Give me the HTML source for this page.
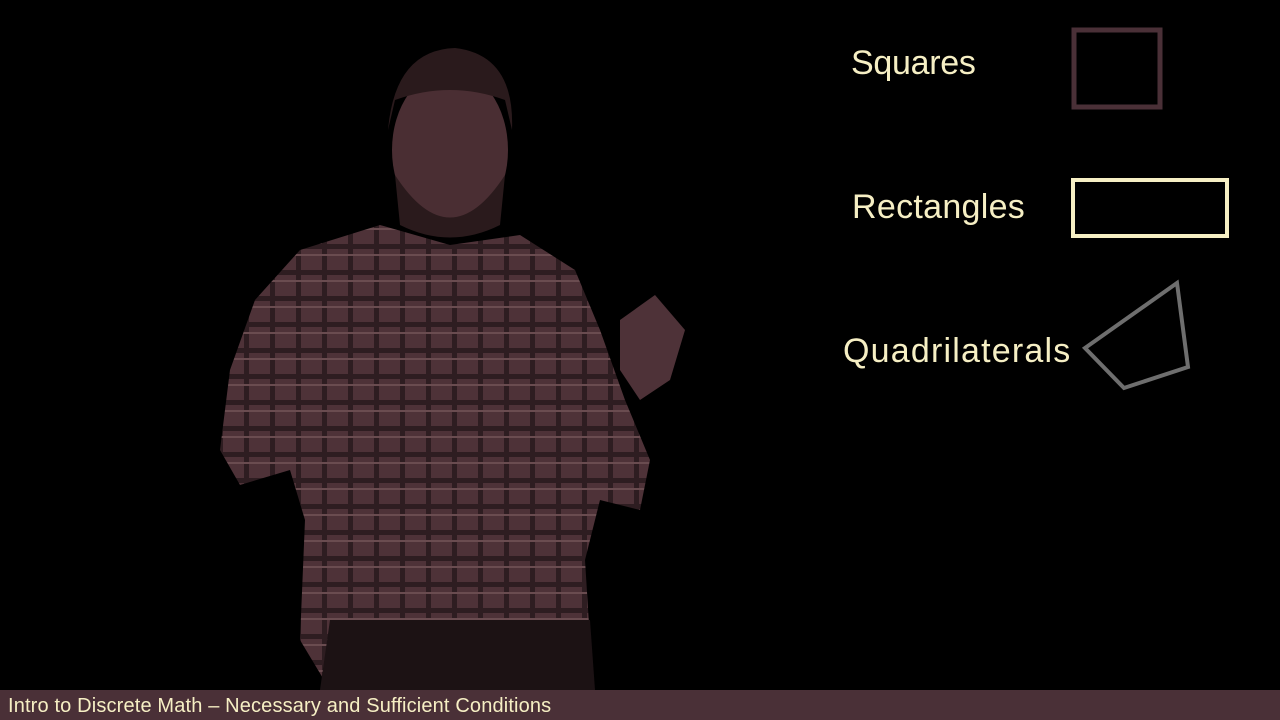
<!DOCTYPE html>
<html><head><style>
body{margin:0;width:1280px;height:720px;background:#000;overflow:hidden;position:relative;font-family:"Liberation Sans",sans-serif}
.t{position:absolute;color:#f6efc4;font-size:34px;letter-spacing:-0.3px}
.bar{position:absolute;left:0;top:690px;width:1280px;height:30px;background:#4a3037}
.bar span{position:absolute;left:8px;top:5px;color:#f6efc4;font-size:20px;letter-spacing:0.15px}
</style></head><body>
<svg width="1280" height="720" style="position:absolute;left:0;top:0">
<defs>
<pattern id="pl" width="26" height="26" patternUnits="userSpaceOnUse">
<rect width="26" height="26" fill="#4e3238"/>
<rect x="0" y="10" width="26" height="5" fill="#2e1d21"/>
<rect x="10" y="0" width="5" height="26" fill="#2e1d21"/>
<rect x="0" y="20" width="26" height="2" fill="#6a4c50"/>
</pattern>
</defs>
<path d="M300,250 L380,225 L450,245 L520,235 L575,270 L600,330 L625,400 L650,460 L640,510 L600,500 L585,560 L590,640 L540,690 L330,690 L300,640 L305,520 L290,470 L240,485 L220,450 L230,370 L255,300 Z" fill="url(#pl)"/>
<path d="M620,320 L655,295 L685,330 L670,380 L640,400 L620,370 Z" fill="#4e3238"/>
<path d="M330,620 L590,620 L595,690 L320,690 Z" fill="#1c1214"/>
<ellipse cx="450" cy="150" rx="58" ry="80" fill="#4a2e33"/>
<path d="M388,130 Q395,50 455,48 Q515,55 512,130 L505,100 Q450,80 395,100 Z" fill="#2a1a1c"/>
<path d="M395,175 Q450,260 505,175 L500,225 Q450,250 400,225 Z" fill="#2a1a1c"/>
<rect x="1074" y="30" width="86" height="77" fill="none" stroke="#4a3037" stroke-width="5"/>
<rect x="1073" y="180" width="154" height="56" fill="none" stroke="#f6efc4" stroke-width="4"/>
<polygon points="1177,283 1085,348 1124,388 1188,367" fill="none" stroke="#6e6e6e" stroke-width="4"/>
</svg>
<div class="t" style="left:851px;top:44px">Squares</div>
<div class="t" style="left:852px;top:188px;letter-spacing:0.3px">Rectangles</div>
<div class="t" style="left:843px;top:332px;letter-spacing:1.2px">Quadrilaterals</div>
<div class="bar"><span>Intro to Discrete Math – Necessary and Sufficient Conditions</span></div>
</body></html>
